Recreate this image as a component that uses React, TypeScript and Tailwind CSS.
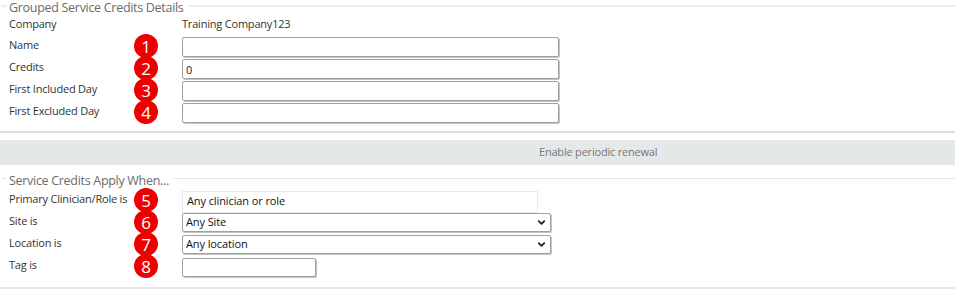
import { ChevronDown } from 'lucide-react';

const Badge = ({ n }: { n: number }) => (
  <div className="w-6 h-6 shrink-0 rounded-full bg-[#ee0000] text-white flex items-center justify-center text-[17px] font-medium leading-none translate-y-[1px]">
    {n}
  </div>
);

const Legend = ({ text, thin }: { text: string; thin?: boolean }) => (
  <div className="flex items-center h-[14px]">
    <div className={`w-[5px] ${thin ? 'h-px bg-[#e2e2e2]' : 'h-[2px] bg-[#ececec]'} ml-[1px] self-start mt-[4px]`} />
    <span className="px-[3px] text-[12.5px] leading-[14px] tracking-[-0.3px] text-[#6b6b6b] whitespace-nowrap">{text}</span>
    <div className={`flex-1 ${thin ? 'h-px bg-[#e6e6e6]' : 'h-[2px] bg-[#efefef]'} self-start mt-[4px]`} />
  </div>
);

const Row = ({ label, n, children }: { label: string; n?: number; children?: React.ReactNode }) => (
  <div className="flex items-center h-[22px]">
    <div className="w-[134px] pl-[9px] shrink-0 text-[11px] tracking-[-0.2px] text-[#333] whitespace-nowrap">{label}</div>
    <div className="w-[48px] shrink-0 flex items-center">{n !== undefined && <Badge n={n} />}</div>
    <div className="flex items-center">{children}</div>
  </div>
);

const TextInput = ({ w, value = '' }: { w: string; value?: string }) => (
  <input
    readOnly
    value={value}
    className={`${w} h-[20px] mt-[4px] border border-[#a0a0a0] rounded-[2px] shadow-[1px_1px_0_#c4c4c4] px-[3px] text-[11px] text-[#222] bg-white outline-none`}
  />
);

const Select = ({ value }: { value: string }) => (
  <div className="relative w-[369px] h-[19px] mt-[2px] border border-[#a0a0a0] rounded-[2px] shadow-[1px_1px_0_#c4c4c4] bg-white flex items-center px-[3px] text-[11px] tracking-[-0.1px] text-[#111]">
    {value}
    <ChevronDown size={11} strokeWidth={4} className="absolute right-[3px] top-[3px] text-[#222]" />
  </div>
);

export default function App() {
  return (
    <div className="w-[955px] h-[289px] pt-px bg-white overflow-hidden font-['Open_Sans',sans-serif]">
      <div className="border-b-2 border-[#dcdcdc] pb-[9px]">
        <Legend text="Grouped Service Credits Details" />
        <div className="flex items-center h-[19px]">
          <div className="w-[182px] pl-[9px] text-[11px] tracking-[-0.2px] text-[#333]">Company</div>
          <div className="text-[11px] tracking-[-0.2px] text-[#333]">Training Company123</div>
        </div>
        <Row label="Name" n={1}><TextInput w="w-[377px]" /></Row>
        <Row label="Credits" n={2}><TextInput w="w-[377px]" value="0" /></Row>
        <Row label="First Included Day" n={3}><TextInput w="w-[377px]" /></Row>
        <Row label="First Excluded Day" n={4}><TextInput w="w-[377px]" /></Row>
      </div>

      <div className="mt-[7px] h-[25px] bg-[#e5e8e8] flex items-center pl-[539px] text-[11px] tracking-[-0.2px] text-[#777]">
        Enable periodic renewal
      </div>

      <div className="mt-[9px] border-b-2 border-[#e6e6e6] pb-[11px]">
        <Legend text="Service Credits Apply When..." thin />
        <Row label="Primary Clinician/Role is" n={5}>
          <div className="w-[356px] h-[22px] mt-[5px] border border-[#e4ecf3] flex items-center px-[4px] text-[11px] tracking-[-0.1px] text-[#111]">
            Any clinician or role
          </div>
        </Row>
        <Row label="Site is" n={6}><Select value="Any Site" /></Row>
        <Row label="Location is" n={7}><Select value="Any location" /></Row>
        <Row label="Tag is" n={8}>
          <input readOnly className="w-[134px] h-[19px] mt-[4px] border border-[#a0a0a0] rounded-[2px] shadow-[1px_1px_0_#c4c4c4] bg-white outline-none" />
        </Row>
      </div>
    </div>
  );
}
